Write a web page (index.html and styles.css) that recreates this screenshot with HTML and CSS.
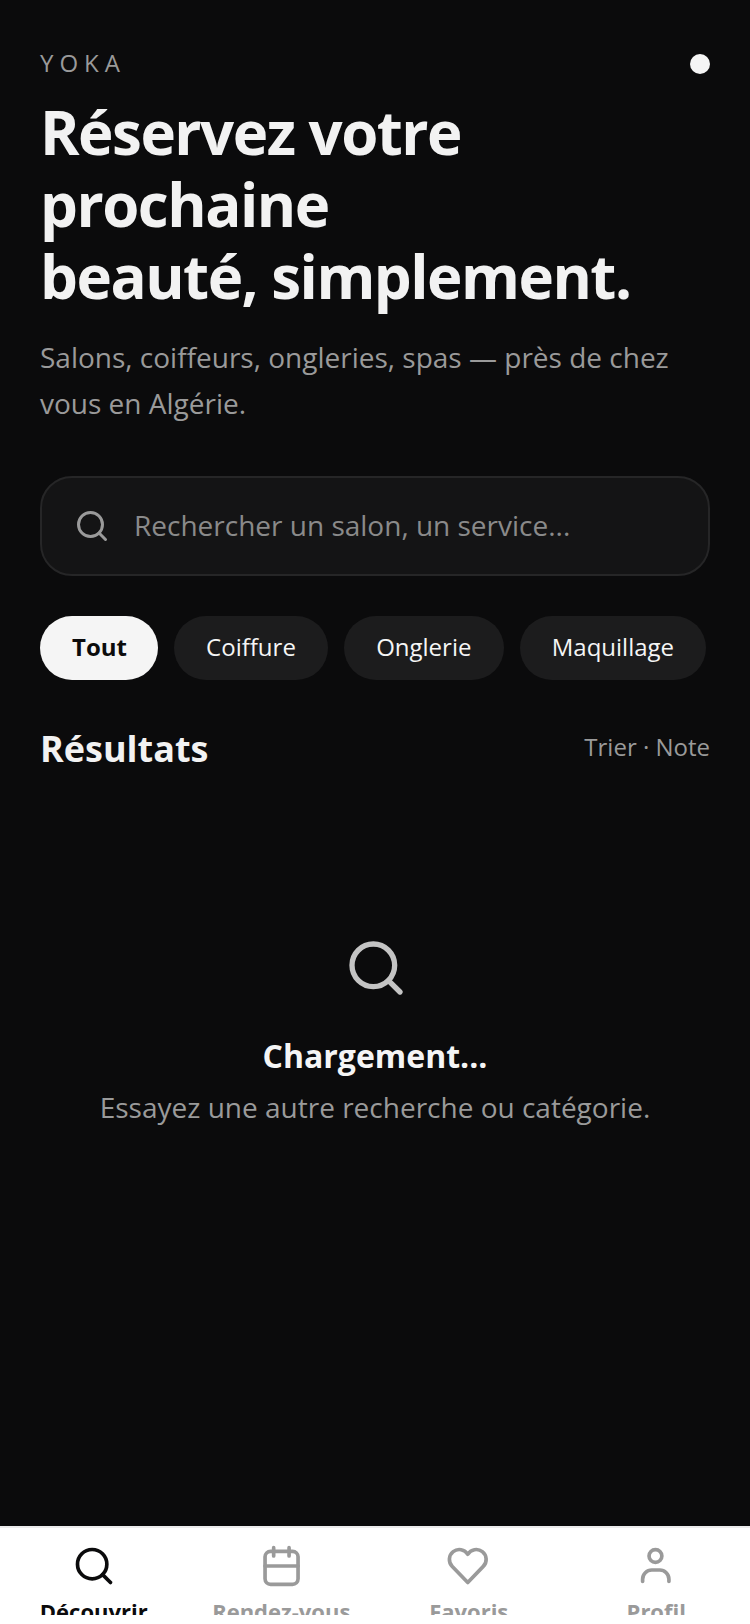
FILE: index.html
```html
<!DOCTYPE html>
<html lang="fr">
<head>
<meta charset="utf-8">
<title>YOKA</title>
<link rel="stylesheet" href="styles.css">
</head>
<body>
<div class="app">
  <main class="main">
    <header class="brand-row">
      <span class="brand">YOKA</span>
      <span class="dot"></span>
    </header>
    <h1 class="title">Réservez votre<br>prochaine<br>beauté, simplement.</h1>
    <p class="subtitle">Salons, coiffeurs, ongleries, spas — près de chez vous en Algérie.</p>
    <div class="search">
      <svg class="search-icon" viewBox="0 0 24 24" fill="none" stroke="currentColor" stroke-width="2" stroke-linecap="round"><circle cx="11" cy="11" r="8"/><path d="M21 21l-4.3-4.3"/></svg>
      <span class="placeholder">Rechercher un salon, un service...</span>
    </div>
    <div class="chips">
      <span class="chip chip-active">Tout</span>
      <span class="chip">Coiffure</span>
      <span class="chip">Onglerie</span>
      <span class="chip">Maquillage</span>
    </div>
    <div class="results-head">
      <h2 class="results-title">Résultats</h2>
      <span class="sort">Trier · Note</span>
    </div>
    <section class="empty">
      <svg class="empty-icon" viewBox="0 0 24 24" fill="none" stroke="currentColor" stroke-width="2" stroke-linecap="round"><circle cx="11" cy="11" r="8"/><path d="M21 21l-4.3-4.3"/></svg>
      <div class="empty-title">Chargement...</div>
      <div class="empty-text">Essayez une autre recherche ou catégorie.</div>
    </section>
  </main>
  <nav class="nav">
    <div class="nav-clip">
      <div class="tab tab-active">
        <svg class="tab-icon" viewBox="0 0 24 24" fill="none" stroke="currentColor" stroke-width="2" stroke-linecap="round"><circle cx="11" cy="11" r="8"/><path d="M21 21l-4.3-4.3"/></svg>
        <span class="tab-label">Découvrir</span>
      </div>
      <div class="tab">
        <svg class="tab-icon" viewBox="0 0 24 24" fill="none" stroke="currentColor" stroke-width="2" stroke-linecap="round" stroke-linejoin="round"><rect x="3.3" y="4" width="18" height="18" rx="3"/><path d="M16.4 2v4.5M8 2v4.5M3.3 12h18"/></svg>
        <span class="tab-label">Rendez-vous</span>
      </div>
      <div class="tab">
        <svg class="tab-icon" viewBox="0 0 24 24" fill="none" stroke="currentColor" stroke-width="2" stroke-linecap="round" stroke-linejoin="round"><path d="M11.33 21L2.88 12.22A5.4 5.4 0 1 1 11.33 5.62A5.4 5.4 0 1 1 19.78 12.22Z"/></svg>
        <span class="tab-label">Favoris</span>
      </div>
      <div class="tab">
        <svg class="tab-icon" viewBox="0 0 24 24" fill="none" stroke="currentColor" stroke-width="2" stroke-linecap="round" stroke-linejoin="round"><circle cx="11.7" cy="6.55" r="3.5"/><path d="M4.7 20.4v-1.2a5 5 0 0 1 5-5h4.35a5 5 0 0 1 5 5v1.2"/></svg>
        <span class="tab-label">Profil</span>
      </div>
    </div>
  </nav>
</div>
</body>
</html>
```
FILE: styles.css
```css
* { box-sizing: border-box; margin: 0; padding: 0; }
html, body { width: 750px; height: 1624px; overflow: hidden; }
body { font-family: "Open Sans", sans-serif; background: #0b0b0c; color: #f5f5f5; }
.app { height: 1624px; display: flex; flex-direction: column; }
.main { flex: 1; padding: 47px 40px 0; min-height: 0; }
.brand-row { display: flex; justify-content: space-between; align-items: center; height: 32px; }
.brand { font-size: 24px; letter-spacing: 6px; color: #9a9a9a; line-height: 32px; }
.dot { width: 20px; height: 20px; border-radius: 50%; background: #f5f5f5; margin-top: 2px; }
.title { font-size: 60px; line-height: 72px; font-weight: 700; letter-spacing: -1.5px; margin-top: 17px; color: #f2f2f2; }
.subtitle { font-size: 28px; line-height: 46px; color: #9a9a9a; margin-top: 22px; }
.search { height: 100px; margin-top: 50px; display: flex; align-items: center; gap: 24px; padding: 0 32px; background: #141415; border: 2px solid #262627; border-radius: 32px; }
.search-icon { width: 36px; height: 36px; color: #9a9a9a; flex: none; }
.placeholder { font-size: 28px; color: #8a8a8a; padding-bottom: 2px; }
.chips { display: flex; gap: 16px; margin-top: 40px; }
.chip { height: 64px; padding: 0 32.15px 3px; display: flex; align-items: center; border-radius: 32px; background: #1c1c1d; font-size: 24px; color: #f5f5f5; }
.chip-active { background: #f5f5f5; color: #0b0b0c; font-weight: 700; padding: 0 31px 3px 32px; }
.results-head { display: flex; justify-content: space-between; align-items: center; margin-top: 45px; }
.results-title { font-size: 36px; line-height: 48px; font-weight: 700; color: #f2f2f2; }
.sort { font-size: 24px; color: #9a9a9a; padding-bottom: 5px; }
.empty { display: flex; flex-direction: column; align-items: center; margin-top: 163px; }
.empty-icon { width: 64px; height: 64px; color: #c4c4c4; margin-left: 2px; }
.empty-title { font-size: 32px; font-weight: 700; line-height: 44px; margin-top: 34px; color: #f5f5f5; }
.empty-text { font-size: 28px; line-height: 44px; color: #9a9a9a; margin-top: 7px; }
.nav { height: 98px; background: #fff; border-top: 2px solid #ececec; padding-top: 16px; }
.nav-clip { height: 71px; overflow: hidden; display: grid; grid-template-columns: repeat(4, 1fr); }
.tab { display: flex; flex-direction: column; align-items: center; color: #9a9a9a; }
.tab-active { color: #0b0b0c; }
.tab-icon { width: 44px; height: 44px; flex: none; }
.tab-label { font-size: 22px; font-weight: 700; line-height: 30px; margin-top: 8px; }
```
